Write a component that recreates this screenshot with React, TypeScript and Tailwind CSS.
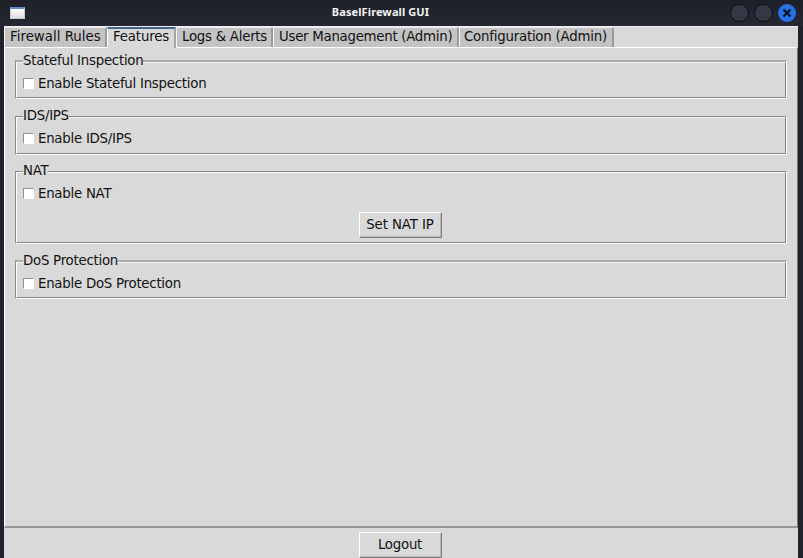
import type { ReactNode } from 'react';

const tabs = [
  { label: 'Firewall Rules', box: 'w-[103px] pl-[5px] tracking-[0.02px]' },
  { label: 'Features', box: 'w-[69px] pl-[5px] tracking-[-0.15px]' },
  { label: 'Logs & Alerts', box: 'w-[97px] pl-[5px] tracking-[-0.25px]' },
  { label: 'User Management (Admin)', box: 'w-[186px] pl-[5px] tracking-[-0.27px]' },
  { label: 'Configuration (Admin)', box: 'w-[155px] pl-[4px] tracking-[-0.22px]' },
];

function Tab({ label, box, active }: { label: string; box: string; active: boolean }) {
  return (
    <div
      className={`${box} shrink-0 whitespace-nowrap border-l ${
        active
          ? 'relative h-[21px] border-r-2 border-t-2 border-l-white border-r-[#a5a5a5] border-t-[#43678c] bg-[#d9d9d9] leading-[16px]'
          : 'h-[20px] rounded-tr-[2px] border-r-2 border-t border-l-[#f5f5f5] border-r-[#9a9a9a] border-t-[#eee] bg-[#c3c3c3] leading-[17px]'
      }`}
    >
      {label}
    </div>
  );
}

function Group({ title, frame, children, soft }: { title: string; frame: string; children: ReactNode; soft?: boolean }) {
  return (
    <section
      className={`${frame} relative border-l border-b border-r border-l-[#8b8b8b] border-r-white border-b-white ${
        soft ? 'border-t-2 border-t-[#acacac]' : 'border-t border-t-[#868686]'
      }`}
    >
      <div className="h-full border border-l-white border-t-[#f6f6f6] border-r-[#858585] border-b-[#868686]">
        {children}
      </div>
      <h2
        className={`absolute left-[7px] whitespace-nowrap bg-[#d9d9d9] leading-[18px] ${soft ? '-top-[11px] pt-px' : '-top-[10px]'}`}
      >
        {title}
      </h2>
    </section>
  );
}

function Check({ label }: { label: string }) {
  return (
    <label className="flex h-[18px] items-center gap-[4px] pl-[6px] whitespace-nowrap">
      <input
        type="checkbox"
        className="mx-0 mt-0 mb-[2px] h-[11px] w-[11px] appearance-none border border-t-[#929292] border-l-[#929292] border-r-white border-b-white bg-white"
      />
      <span>{label}</span>
    </label>
  );
}

function Button({ label, spacing }: { label: string; spacing: string }) {
  return (
    <button
      className={`${spacing} h-[26px] w-[83px] border border-t-white border-l-white border-r-[#808080] border-b-[#808080] bg-[#d9d9d9] pb-px shadow-[inset_-1px_-1px_0_#b5b5b5]`}
    >
      {label}
    </button>
  );
}

export default function App() {
  return (
    <div className="flex h-[558px] w-[803px] flex-col overflow-hidden bg-[#20232c] font-['DejaVu_Sans',sans-serif] text-[13.33px] tracking-[-0.25px] text-[#111]">
      <header className="flex h-[26px] shrink-0 items-center bg-linear-to-b from-[#1e2028] to-[#242832] pl-[10px] pr-[7px]">
        <div className="mb-px h-[12px] w-[15px] border border-[#c8c8c4] border-t-2 border-t-[#5f87c0] bg-linear-to-b from-white to-[#dddddb]" />
        <h1 className="flex-1 pb-[2px] pl-[6px] text-center font-['Noto_Sans','Open_Sans',sans-serif] text-[11px] font-bold leading-[22px] tracking-[0.1px] text-[#f3f3f3]">
          BaselFirewall GUI
        </h1>
        <div className="mb-px flex gap-[5px]">
          <span className="h-[18px] w-[19px] rounded-full border border-[#0b0d12] bg-[#333844]" />
          <span className="h-[18px] w-[19px] rounded-full border border-[#0b0d12] bg-[#333844]" />
          <span className="flex h-[18px] w-[18px] items-center justify-center rounded-full bg-[#2770ea]">
            <svg width="10" height="10" viewBox="0 0 10 10" fill="none" stroke="#07101f" strokeWidth="2.2">
              <path d="M1.5 1.5 8.5 8.5M8.5 1.5 1.5 8.5" />
            </svg>
          </span>
        </div>
      </header>

      <main className="ml-[4px] flex w-[794px] flex-1 flex-col bg-[#d9d9d9]">
        <nav className="flex h-[21px] shrink-0 border-t border-t-[#ededed]">
          {tabs.map((t) => (
            <Tab key={t.label} label={t.label} box={t.box} active={t.label === 'Features'} />
          ))}
        </nav>
        <div className="flex h-[481px] shrink-0 flex-col border-t border-r border-b-2 border-l border-t-white border-r-[#777] border-b-[#969696] border-l-white px-[10px] pt-[12px]">
          <Group title="Stateful Inspection" frame="h-[39px]" soft>
            <div className="pt-[12px]">
              <Check label="Enable Stateful Inspection" />
            </div>
          </Group>
          <Group title="IDS/IPS" frame="mt-[17px] h-[39px]">
            <div className="pt-[12px]">
              <Check label="Enable IDS/IPS" />
            </div>
          </Group>
          <Group title="NAT" frame="mt-[16px] h-[73px]">
            <div className="flex flex-col pt-[12px]">
              <Check label="Enable NAT" />
              <div className="flex justify-center pt-[9px] pr-[2px]">
                <Button label="Set NAT IP" spacing="tracking-[-0.1px]" />
              </div>
            </div>
          </Group>
          <Group title="DoS Protection" frame="mt-[16px] h-[39px]" soft>
            <div className="pt-[12px]">
              <Check label="Enable DoS Protection" />
            </div>
          </Group>
        </div>
        <footer className="flex justify-center pt-[4px] pr-[2px]">
          <Button label="Logout" spacing="tracking-[-0.25px]" />
        </footer>
      </main>
    </div>
  );
}
